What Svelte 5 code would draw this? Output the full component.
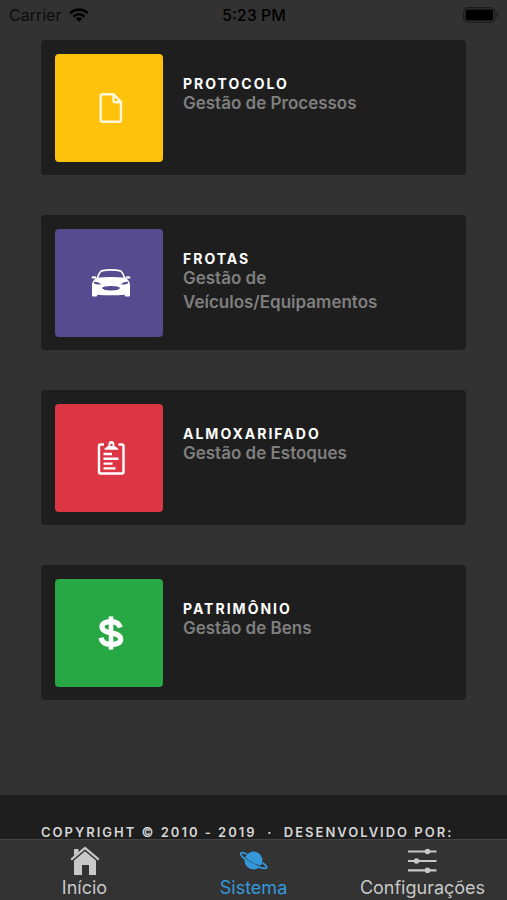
<script>
  const modules = [
    { id: 'file', name: 'Protocolo', text: 'Gestão de Processos', color: '#ffc20a' },
    { id: 'car', name: 'Frotas', text: 'Gestão de Veículos/Equipamentos', color: '#574b90' },
    { id: 'clipboard', name: 'Almoxarifado', text: 'Gestão de Estoques', color: '#dc3645' },
    { id: 'dollar', name: 'Patrimônio', text: 'Gestão de Bens', color: '#28a745' }
  ];
  const tabs = [
    { id: 'home', label: 'Início' },
    { id: 'planet', label: 'Sistema' },
    { id: 'sliders', label: 'Configurações' }
  ];
  let active = $state('planet');
</script>

<div class="app">
  <header class="status">
    <div class="carrier">
      <span>Carrier</span>
      <svg width="20" height="14" viewBox="0 0 20 14" aria-hidden="true">
        <path d="M1.2 5.2A12.6 12.6 0 0 1 18.8 5.2" fill="none" stroke="#000" stroke-width="2.6" />
        <path d="M4.4 8.5A8 8 0 0 1 15.6 8.5" fill="none" stroke="#000" stroke-width="2.5" />
        <path d="M10 13.8L6.7 10.5A4.7 4.7 0 0 1 13.3 10.5Z" fill="#000" />
      </svg>
    </div>
    <time>5:23 PM</time>
    <svg class="battery" width="36" height="16" viewBox="0 0 36 16" aria-hidden="true">
      <rect x=".7" y=".7" width="31" height="14.6" rx="4" fill="none" stroke="#1c1c1c" stroke-width="1.2" />
      <rect x="2.5" y="2.5" width="27.5" height="11" rx="2" fill="#000" />
      <path d="M33.5 5.5Q35.5 6.2 35.5 8T33.5 10.5Z" fill="#1c1c1c" />
    </svg>
  </header>

  <div class="scroll">
    <main>
      {#each modules as m (m.id)}
        <a class="card" href="#{m.id}">
          <span class="tile" style="background: {m.color}">
            {#if m.id === 'file'}
              <svg width="24" height="30" viewBox="0 0 24 30" aria-hidden="true">
                <path d="M3.5 1.3H14.5L22 8.8V27Q22 28.7 20.2 28.7H3.5Q1.7 28.7 1.7 27V3Q1.7 1.3 3.5 1.3M14.5 1.3V7.2Q14.5 9.2 16.5 9.2H22" fill="none" stroke="#fff8dc" stroke-width="2.4" stroke-linejoin="round" />
              </svg>
            {:else if m.id === 'car'}
              <svg width="40" height="28" viewBox="0 0 40 28" aria-hidden="true">
                <path d="M6.3 9.5Q8 3.5 10.5 1.9Q20 -.1 29.5 1.9Q32 3.5 33.7 9.5" fill="none" stroke="#fff" stroke-width="1.7" />
                <path d="M5.5 8.8Q20 7.2 34.5 8.8Q38.8 11.5 39 16V26.5Q39 27.6 38 27.6H34.8Q33.8 27.6 33.8 26.5V25.7Q20 26.8 6.2 25.7V26.5Q6.2 27.6 5.2 27.6H2Q1 27.6 1 26.5V16Q1.2 11.5 5.5 8.8Z" fill="#fff" />
                <ellipse cx="3" cy="8.4" rx="2.5" ry="1.2" fill="#fff" />
                <ellipse cx="37" cy="8.4" rx="2.5" ry="1.2" fill="#fff" />
                <path d="M2.8 12.8Q7 12.6 10.2 15.2Q6 16 3.2 14.5ZM37.2 12.8Q33 12.6 29.8 15.2Q34 16 36.8 14.5ZM10.8 19Q12 16.9 20 16.9T29.2 19Q27.5 21.5 20 21.5T10.8 19Z" fill="#574b90" />
              </svg>
            {:else if m.id === 'clipboard'}
              <svg width="28" height="36" viewBox="0 0 28 36" aria-hidden="true">
                <path d="M7 4.5H3.5Q2 4.5 2 6V32Q2 33.5 3.5 33.5H25Q26.5 33.5 26.5 32V6Q26.5 4.5 25 4.5H21.5" fill="none" stroke="#fff" stroke-width="2.4" />
                <path d="M7.5 9.8V8.5L11.5 5.7V4A2.9 3 0 0 1 17.3 4V5.7L21.2 8.5V9.8Z" fill="#fff" />
                <circle cx="14.4" cy="4.9" r="1.2" fill="#dc3645" />
                <path d="M6.5 14H15M6.5 18.8H21.5M6.5 23.6H15.5M6.5 28.4H18.5" fill="none" stroke="#fff" stroke-width="2.4" />
              </svg>
            {:else}
              <svg width="26" height="34" viewBox="0 0 26 34" aria-hidden="true">
                <path d="M13 .4V33.6" fill="none" stroke="#fff" stroke-width="4.6" />
                <path d="M22.3 11.5Q20.8 5.6 13 5.6Q4 5.6 4 10.8Q4 15.2 12 16.6Q22.7 18.3 22.7 23Q22.7 28.4 13 28.4Q4.3 28.4 3 21.8" fill="none" stroke="#fff" stroke-width="5.2" />
              </svg>
            {/if}
          </span>
          <span class="copy">
            <strong>{m.name}</strong>
            <span class="text">{m.text}</span>
          </span>
        </a>
      {/each}
    </main>
    <footer>Copyright © 2010 - 2019 &nbsp;·&nbsp; Desenvolvido por:</footer>
  </div>

  <nav>
    {#each tabs as t (t.id)}
      <button type="button" class:active={active === t.id} onclick={() => (active = t.id)}>
        <svg width="30" height="30" viewBox="0 0 30 30" aria-hidden="true">
          {#if t.id === 'home'}
            <path d="M1.2 13.6L15 2L28.8 13.6" fill="none" stroke="currentColor" stroke-width="2.2" />
            <path d="M4 3H8.5V6.3L4 10ZM15 5.2L26 14.4V29H19V19H12V29H4V14.4Z" fill="currentColor" />
          {:else if t.id === 'planet'}
            <circle cx="14.5" cy="14.5" r="9" fill="currentColor" />
            <path d="M4 10.5Q9.5 15.6 15 18T26 20.3" fill="none" stroke="#333" stroke-width="1.3" />
            <path d="M7.8 8Q2 5.5 1.6 7.5Q1.8 10.5 10.5 16.3Q20.5 22.5 26.5 22.3Q30 21.5 23.5 16.8" fill="none" stroke="currentColor" stroke-width="1.8" />
          {:else}
            <path d="M0 5.5H28.5M0 15H28.5M0 24.3H28.5" fill="none" stroke="currentColor" stroke-width="2.2" />
            <circle cx="19.5" cy="5.5" r="2.8" fill="currentColor" />
            <circle cx="8.5" cy="15" r="2.8" fill="currentColor" />
            <circle cx="19.5" cy="24.3" r="2.8" fill="currentColor" />
          {/if}
        </svg>
        <span>{t.label}</span>
      </button>
    {/each}
  </nav>
</div>

<style>
  :global(body) {
    margin: 0;
    background: #323232;
  }
  .app {
    display: flex;
    flex-direction: column;
    height: 100vh;
    background: #323232;
    font-family: Inter, 'Liberation Sans', sans-serif;
  }
  .status {
    display: grid;
    grid-template-columns: 1fr auto 1fr;
    align-items: center;
    flex: none;
    height: 30px;
    padding: 0 8px 0 9px;
    margin-bottom: 10px;
    font-size: 16px;
    color: #000;
  }
  .carrier {
    display: flex;
    align-items: center;
    gap: 8px;
    color: #0c0c0c;
  }
  time {
    font-weight: 500;
  }
  .battery {
    justify-self: end;
  }
  .scroll {
    flex: 1;
    min-height: 0;
    overflow-y: auto;
    scrollbar-width: none;
  }
  main {
    display: flex;
    flex-direction: column;
    gap: 40px;
    padding: 0 41px 95px;
  }
  .card {
    display: flex;
    gap: 20px;
    padding: 14px 20px 13px 14px;
    border-radius: 4px;
    background: #1e1e1e;
    text-decoration: none;
  }
  .tile {
    display: flex;
    align-items: center;
    justify-content: center;
    flex: none;
    box-sizing: border-box;
    width: 108px;
    height: 108px;
    padding-left: 4px;
    border-radius: 4px;
  }
  .copy {
    display: flex;
    flex-direction: column;
    padding-top: 23px;
  }
  strong,
  footer {
    line-height: 14px;
    letter-spacing: 2px;
    text-transform: uppercase;
  }
  strong {
    font-size: 14px;
    font-weight: 700;
    color: #fff;
  }
  .text {
    font-size: 17px;
    font-weight: 600;
    line-height: 24px;
    color: #7f7f7f;
  }
  footer {
    padding: 30px 41px;
    background: #1e1e1e;
    color: #d6d6d6;
    font-size: 13px;
    font-weight: 600;
  }
  nav {
    display: grid;
    grid-template-columns: repeat(3, 1fr);
    flex: none;
    box-sizing: border-box;
    height: 61px;
    border-top: 1px solid #444;
    background: #333;
  }
  button {
    display: flex;
    flex-direction: column;
    align-items: center;
    padding: 6px 0 0;
    border: 0;
    background: none;
    color: #c8c8c8;
    font: inherit;
    font-size: 18px;
    line-height: 24px;
    cursor: pointer;
  }
  button.active {
    color: #3498db;
  }
</style>
